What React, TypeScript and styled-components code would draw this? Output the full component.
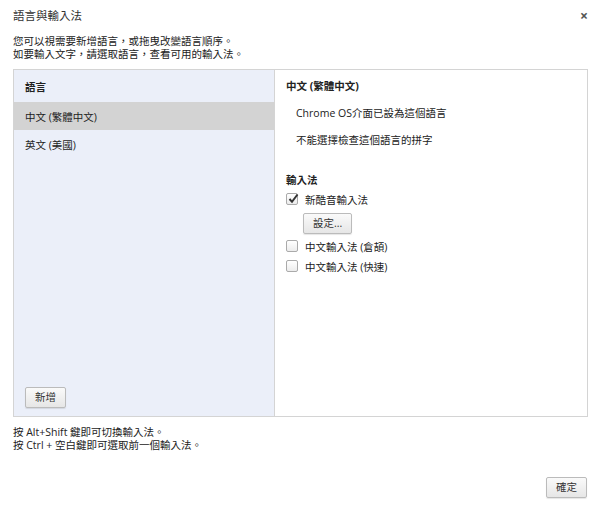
import React from "react";
import styled, { createGlobalStyle } from "styled-components";

const Global = createGlobalStyle`
  html, body { margin: 0; padding: 0; background: #fff; }
  body { font-family: "Open Sans", "Noto Sans CJK TC", sans-serif; font-size: 10.5px; color: #222; }
  * { box-sizing: border-box; }
`;

const Dialog = styled.div`
  width: 600px;
  height: 506px;
  display: flex;
  flex-direction: column;
  padding: 0 13px 0 13px;
`;

const TitleBar = styled.div`
  display: flex;
  justify-content: space-between;
  align-items: center;
  height: 28px;
`;

const Title = styled.div`
  font-size: 11.5px;
  color: #333;
  padding-top: 1px;
`;

const Close = styled.div`
  font-size: 14px;
  font-weight: bold;
  color: #555;
  margin-right: -1px;
  padding-top: 2px;
`;

const Desc = styled.div`
  margin-top: 7px;
  line-height: 13px;
`;

const Panel = styled.div`
  margin-top: 8px;
  height: 348px;
  width: 575px;
  border: 1px solid #d4d4d4;
  display: flex;
`;

const LeftPane = styled.div`
  width: 261px;
  background: #ebeff9;
  border-right: 1px solid #d4d4d4;
  display: flex;
  flex-direction: column;
`;

const ListHeader = styled.div`
  height: 32px;
  display: flex;
  align-items: center;
  padding-left: 11px;
  font-weight: bold;
`;

const ListItem = styled.div<{ $selected?: boolean }>`
  height: 28px;
  display: flex;
  align-items: center;
  padding-left: 11px;
  background: ${(p) => (p.$selected ? "#d3d3d3" : "transparent")};
`;

const LeftFooter = styled.div`
  margin-top: auto;
  padding: 0 0 8px 11px;
`;

const Button = styled.button`
  font-family: "Open Sans", "Noto Sans CJK TC", sans-serif;
  font-size: 10.5px;
  color: #333;
  height: 21px;
  padding: 0 9px;
  border: 1px solid #bbb;
  border-radius: 2px;
  background: linear-gradient(#fafafa, #e6e6e6);
  box-shadow: 0 1px 1px rgba(0, 0, 0, 0.1);
  line-height: 17px;
`;

const RightPane = styled.div`
  flex: 1;
  padding: 8px 11px;
  display: flex;
  flex-direction: column;
`;

const SectionTitle = styled.div<{ $top?: number }>`
  font-weight: bold;
  margin-top: ${(p) => p.$top ?? 0}px;
  line-height: 17px;
`;

const Note = styled.div`
  padding-left: 10px;
  margin-top: 9px;
  line-height: 18px;
`;

const CheckRow = styled.label`
  display: flex;
  align-items: center;
  gap: 7px;
  height: 20px;
`;

const Box = styled.span`
  width: 12px;
  height: 12px;
  border: 1px solid #aaa;
  border-radius: 2px;
  background: linear-gradient(#fff, #ececec);
  position: relative;
  display: inline-block;
`;

const Tick = styled.svg`
  position: absolute;
  left: 0px;
  top: -2px;
`;

const SettingsWrap = styled.div`
  padding-left: 17px;
  margin: 4px 0 2px;
`;

const Footnote = styled.div`
  margin-top: 9px;
  line-height: 13px;
`;

const BottomBar = styled.div`
  display: flex;
  justify-content: flex-end;
  margin-top: 25px;
`;

const Check = ({ checked, label }: { checked?: boolean; label: string }) => (
  <CheckRow>
    <Box>
      {checked && (
        <Tick width="13" height="13" viewBox="0 0 13 13">
          <path d="M2.5 7 L5 9.8 L10.5 2.5" fill="none" stroke="#333" strokeWidth="2" />
        </Tick>
      )}
    </Box>
    {label}
  </CheckRow>
);

export default function App() {
  return (
    <>
      <Global />
      <Dialog>
        <TitleBar>
          <Title>語言與輸入法</Title>
          <Close>×</Close>
        </TitleBar>
        <Desc>
          您可以視需要新增語言，或拖曳改變語言順序。
          <br />
          如要輸入文字，請選取語言，查看可用的輸入法。
        </Desc>
        <Panel>
          <LeftPane>
            <ListHeader>語言</ListHeader>
            <ListItem $selected>中文 (繁體中文)</ListItem>
            <ListItem>英文 (美國)</ListItem>
            <LeftFooter>
              <Button>新增</Button>
            </LeftFooter>
          </LeftPane>
          <RightPane>
            <SectionTitle>中文 (繁體中文)</SectionTitle>
            <Note>Chrome OS介面已設為這個語言</Note>
            <Note>不能選擇檢查這個語言的拼字</Note>
            <SectionTitle $top={23}>輸入法</SectionTitle>
            <Check checked label="新酷音輸入法" />
            <SettingsWrap>
              <Button>設定...</Button>
            </SettingsWrap>
            <Check label="中文輸入法 (倉頡)" />
            <Check label="中文輸入法 (快速)" />
          </RightPane>
        </Panel>
        <Footnote>
          按 Alt+Shift 鍵即可切換輸入法。
          <br />
          按 Ctrl + 空白鍵即可選取前一個輸入法。
        </Footnote>
        <BottomBar>
          <Button>確定</Button>
        </BottomBar>
      </Dialog>
    </>
  );
}
